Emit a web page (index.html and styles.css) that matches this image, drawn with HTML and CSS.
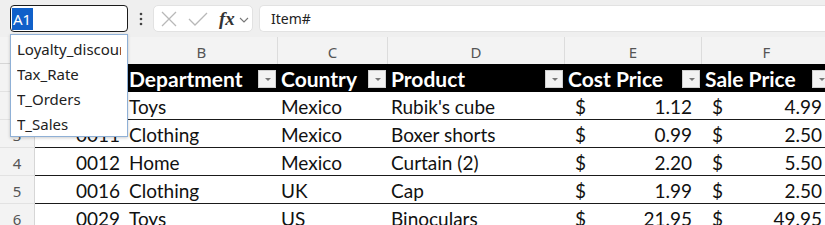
FILE: index.html
```html
<!DOCTYPE html>
<html>
<head>
<meta charset="utf-8">
<link rel="stylesheet" href="styles.css">
</head>
<body>
<div class="app">
  <div class="toolbar">
    <div class="namebox"><span class="sel">A1</span></div>
    <div class="dots">
      <svg width="4" height="14" viewBox="0 0 4 14"><circle cx="2" cy="2" r="1.3" fill="#444"/><circle cx="2" cy="7" r="1.3" fill="#444"/><circle cx="2" cy="12" r="1.3" fill="#444"/></svg>
    </div>
    <div class="fbtns">
      <svg class="ico" width="18" height="18" viewBox="0 0 18 18"><path d="M2 2 L16 16 M16 2 L2 16" stroke="#b8b8b8" stroke-width="1.3" fill="none"/></svg>
      <svg class="ico" width="22" height="18" viewBox="0 0 22 18"><path d="M2 9 L8 15 L20 3" stroke="#b8b8b8" stroke-width="1.3" fill="none"/></svg>
      <span class="fx">fx</span>
      <svg class="chev" width="10" height="6" viewBox="0 0 10 6"><path d="M1 1 L5 5 L9 1" stroke="#777" stroke-width="1.1" fill="none"/></svg>
    </div>
    <div class="finput">Item#</div>
  </div>

  <div class="sheet">
    <div class="corner"></div>
    <div class="ch">A</div>
    <div class="ch">B</div>
    <div class="ch">C</div>
    <div class="ch">D</div>
    <div class="ch">E</div>
    <div class="ch">F</div>

    <div class="rh">1</div>
    <div class="th">Item#<span class="dd"></span></div>
    <div class="th">Department<span class="dd"></span></div>
    <div class="th">Country<span class="dd"></span></div>
    <div class="th">Product<span class="dd"></span></div>
    <div class="th">Cost Price<span class="dd"></span></div>
    <div class="th">Sale Price<span class="dd"></span></div>

    <div class="rh">2</div>
    <div class="td num">0007</div>
    <div class="td">Toys</div>
    <div class="td">Mexico</div>
    <div class="td">Rubik's cube</div>
    <div class="td acc"><span>$</span><span>1.12</span></div>
    <div class="td acc"><span>$</span><span>4.99</span></div>

    <div class="rh">3</div>
    <div class="td num">0011</div>
    <div class="td">Clothing</div>
    <div class="td">Mexico</div>
    <div class="td">Boxer shorts</div>
    <div class="td acc"><span>$</span><span>0.99</span></div>
    <div class="td acc"><span>$</span><span>2.50</span></div>

    <div class="rh">4</div>
    <div class="td num">0012</div>
    <div class="td">Home</div>
    <div class="td">Mexico</div>
    <div class="td">Curtain (2)</div>
    <div class="td acc"><span>$</span><span>2.20</span></div>
    <div class="td acc"><span>$</span><span>5.50</span></div>

    <div class="rh">5</div>
    <div class="td num">0016</div>
    <div class="td">Clothing</div>
    <div class="td">UK</div>
    <div class="td">Cap</div>
    <div class="td acc"><span>$</span><span>1.99</span></div>
    <div class="td acc"><span>$</span><span>2.50</span></div>

    <div class="rh">6</div>
    <div class="td num">0029</div>
    <div class="td">Toys</div>
    <div class="td">US</div>
    <div class="td">Binoculars</div>
    <div class="td acc"><span>$</span><span>21.95</span></div>
    <div class="td acc"><span>$</span><span>49.95</span></div>
  </div>

  <ul class="namelist">
    <li><span>Loyalty_discount</span></li>
    <li><span>Tax_Rate</span></li>
    <li><span>T_Orders</span></li>
    <li><span>T_Sales</span></li>
  </ul>
</div>
</body>
</html>
```
FILE: styles.css
```css
html, body {
  margin: 0;
  padding: 0;
  background: #ffffff;
  overflow: hidden;
}

.app {
  position: relative;
  width: 825px;
  height: 225px;
  overflow: hidden;
  font-family: "Noto Sans", "Open Sans", sans-serif;
}

.toolbar {
  height: 37px;
  box-sizing: border-box;
  background: #efefef;
  display: flex;
  align-items: center;
  padding: 0 0 0 10px;
}

.namebox {
  width: 118px;
  height: 27px;
  box-sizing: border-box;
  border: 1.5px solid #1b1b1b;
  border-radius: 4px;
  background: #fff;
  display: flex;
  align-items: center;
  padding-left: 1px;
}

.sel {
  background: #1060c9;
  color: #fff;
  font-size: 15px;
  line-height: 22px;
  padding: 0 2px 0 1px;
}

.dots {
  width: 25px;
  display: flex;
  justify-content: center;
  align-items: center;
}

.fbtns {
  width: 100px;
  height: 27px;
  box-sizing: border-box;
  background: #fff;
  border: 1px solid #e2e2e2;
  border-radius: 5px;
  display: flex;
  align-items: center;
  padding-left: 6px;
}

.fbtns .ico {
  margin-right: 9px;
}

.fx {
  font-family: "Liberation Serif", serif;
  font-style: italic;
  font-weight: bold;
  font-size: 19px;
  color: #333;
  margin-left: 1px;
  margin-right: 4px;
  line-height: 20px;
}

.chev {
  margin-top: 2px;
}

.finput {
  flex: 1;
  height: 27px;
  box-sizing: border-box;
  margin-left: 6px;
  background: #fff;
  border: 1px solid #e2e2e2;
  border-right: none;
  border-radius: 5px 0 0 5px;
  display: flex;
  align-items: center;
  padding-left: 11px;
  font-size: 14px;
  color: #222;
}

.sheet {
  display: grid;
  grid-template-columns: 35px 91px 152px 110px 177px 137px 130px;
  grid-template-rows: 27px 28px repeat(5, 28px);
}

.corner {
  background: #f3f3f3;
  border-right: 1px solid #d6d6d6;
  border-bottom: 1px solid #d6d6d6;
}

.ch {
  background: #f3f3f3;
  border-right: 1px solid #dcdcdc;
  color: #555;
  font-size: 15px;
  display: flex;
  align-items: center;
  justify-content: center;
  padding-top: 2px;
  box-sizing: border-box;
}

.rh {
  background: #f3f3f3;
  border-right: 1px solid #d6d6d6;
  border-bottom: 1px solid #e2e2e2;
  color: #555;
  font-size: 15px;
  display: flex;
  align-items: center;
  justify-content: center;
  padding-top: 2px;
}

.th {
  background: #000;
  color: #fff;
  font-family: "Lato", sans-serif;
  font-weight: bold;
  font-size: 21px;
  display: flex;
  align-items: center;
  padding-left: 3px;
  position: relative;
  white-space: nowrap;
}

.dd {
  position: absolute;
  right: 2px;
  top: 6px;
  width: 18px;
  height: 18px;
  box-sizing: border-box;
  background: #f2f2f2;
  border: 1px solid #cfcfcf;
}

.dd::after {
  content: "";
  position: absolute;
  left: 6px;
  top: 7px;
  border-left: 3px solid transparent;
  border-right: 3px solid transparent;
  border-top: 3px solid #777;
}

.td {
  font-family: "Lato", sans-serif;
  font-size: 19px;
  color: #111;
  border-bottom: 1px solid #1a1a1a;
  display: flex;
  align-items: center;
  padding-left: 3px;
  padding-top: 2px;
  white-space: nowrap;
}

.td.num {
  justify-content: flex-end;
  padding-right: 6px;
}

.td.acc {
  justify-content: space-between;
  padding-left: 10px;
  padding-right: 10px;
}

.namelist {
  position: absolute;
  left: 10px;
  top: 34px;
  width: 118px;
  height: 103px;
  box-sizing: border-box;
  margin: 0;
  padding: 2px 0 0 0;
  list-style: none;
  background: #fff;
  border: 1px solid #8fb0d6;
  box-shadow: 0 1px 3px rgba(0,0,0,0.2);
  overflow: hidden;
}

.namelist li {
  height: 25px;
  line-height: 25px;
  margin: 0 6px 0 6px;
  font-size: 15px;
  color: #222;
  white-space: nowrap;
  overflow: hidden;
}
```
